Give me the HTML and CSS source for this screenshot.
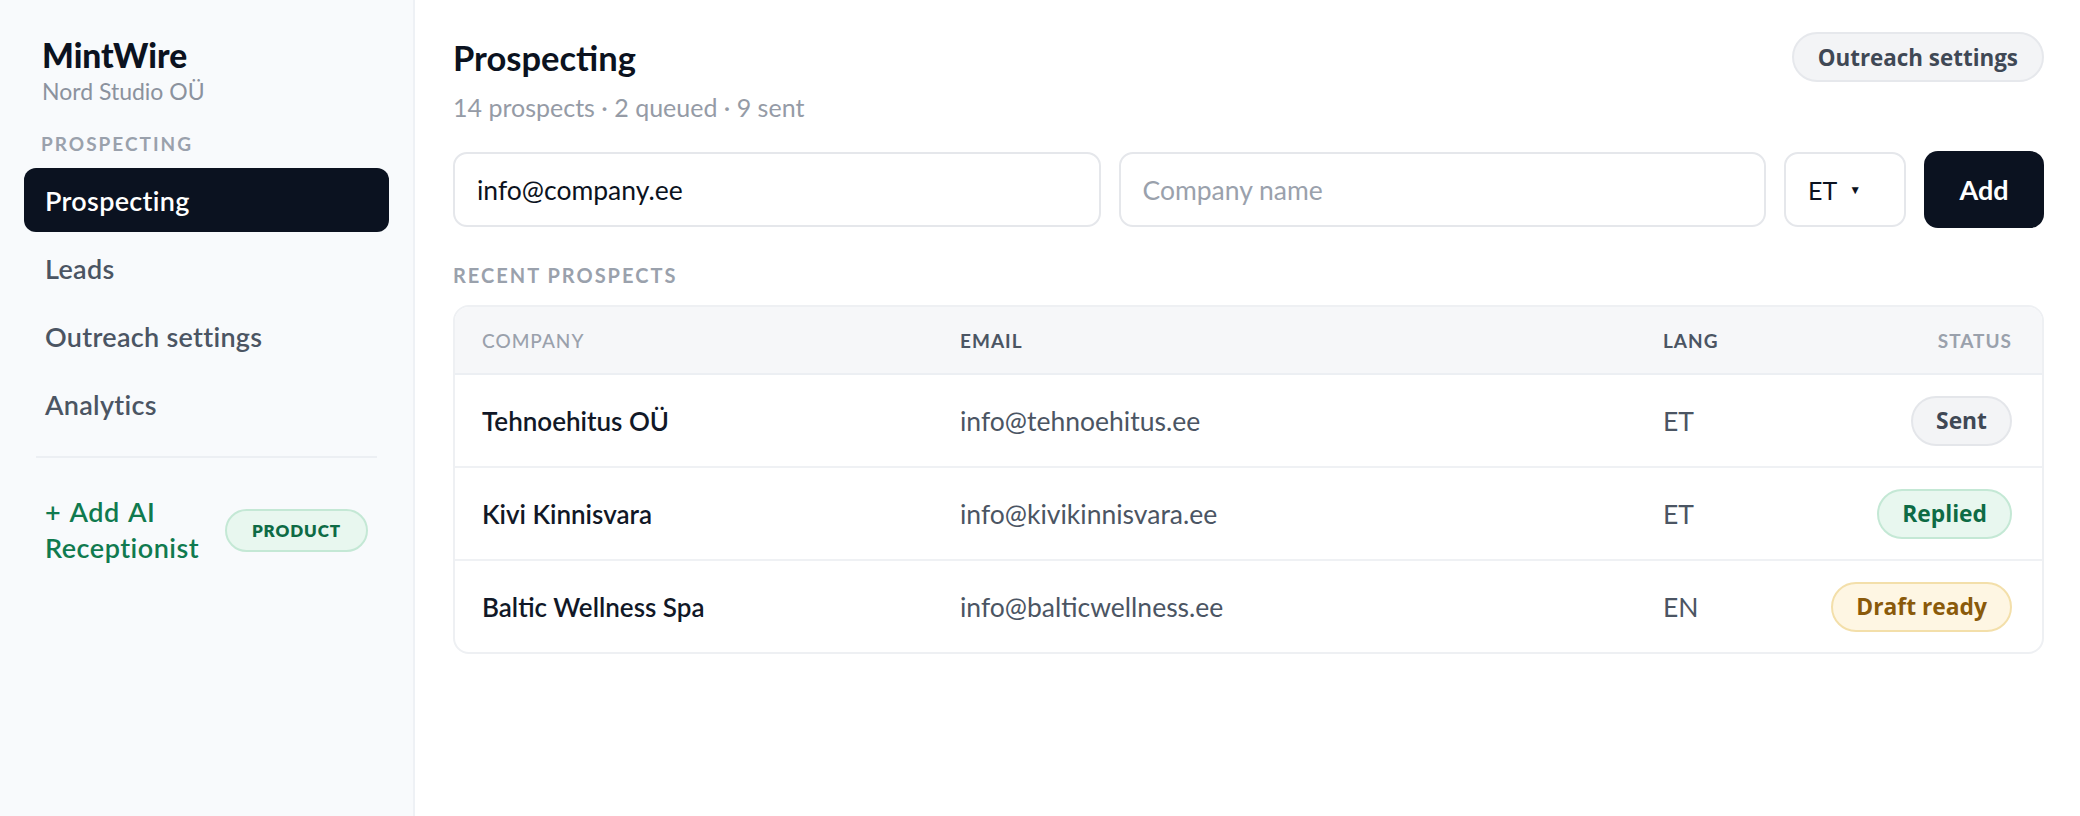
FILE: index.html
```html
<!DOCTYPE html>
<html lang="en">
<head>
    <meta charset="UTF-8">
    <meta name="viewport" content="width=device-width, initial-scale=1.0">
    <title>MintWire - Prospecting</title>
    <link rel="stylesheet" href="styles.css">
</head>
<body>
    <aside class="sidebar">
        <div class="brand">
            <div class="brand-name">MintWire</div>
            <div class="brand-org">Nord Studio OÜ</div>
        </div>

        <div class="nav-label">PROSPECTING</div>
        <nav class="nav">
            <a class="nav-item active" href="#">Prospecting</a>
            <a class="nav-item" href="#">Leads</a>
            <a class="nav-item" href="#">Outreach settings</a>
            <a class="nav-item" href="#">Analytics</a>
        </nav>

        <div class="divider"></div>

        <a class="promo" href="#">
            <span class="promo-text">+ Add AI Receptionist</span>
            <span class="tag">PRODUCT</span>
        </a>
    </aside>

    <main class="main">
        <header class="page-head">
            <div>
                <h1>Prospecting</h1>
                <p class="sub">14 prospects · 2 queued · 9 sent</p>
            </div>
            <button class="btn-ghost" type="button">Outreach settings</button>
        </header>

        <form class="add-row" id="addForm">
            <input class="field" type="email" value="info@company.ee">
            <input class="field" type="text" placeholder="Company name">
            <button class="lang-select" type="button">ET <span class="caret">▼</span></button>
            <button class="btn-add" type="submit">Add</button>
        </form>

        <div class="section-label">RECENT PROSPECTS</div>

        <div class="card">
            <div class="row head">
                <div class="col-muted">COMPANY</div>
                <div>EMAIL</div>
                <div>LANG</div>
                <div class="col-muted right">STATUS</div>
            </div>
            <div class="row">
                <div class="company">Tehnoehitus OÜ</div>
                <div class="email">info@tehnoehitus.ee</div>
                <div class="lang">ET</div>
                <div class="right"><span class="badge sent">Sent</span></div>
            </div>
            <div class="row">
                <div class="company">Kivi Kinnisvara</div>
                <div class="email">info@kivikinnisvara.ee</div>
                <div class="lang">ET</div>
                <div class="right"><span class="badge replied">Replied</span></div>
            </div>
            <div class="row">
                <div class="company">Baltic Wellness Spa</div>
                <div class="email">info@balticwellness.ee</div>
                <div class="lang">EN</div>
                <div class="right"><span class="badge draft">Draft ready</span></div>
            </div>
        </div>
    </main>
</body>
</html>
```

FILE: styles.css
```css
* {
    margin: 0;
    padding: 0;
    box-sizing: border-box;
}

body {
    display: flex;
    height: 100vh;
    font-family: Lato, "Open Sans", sans-serif;
    color: #0b1220;
    background: #fff;
}

a {
    text-decoration: none;
}

/* sidebar */

.sidebar {
    width: 415px;
    flex-shrink: 0;
    background-color: #f8fafc;
    border-right: 2px solid #eef1f5;
    padding: 36px 24px 0 24px;
}

.brand {
    padding: 0 18px;
}

.brand-name {
    font-size: 33.5px;
    line-height: 38px;
    font-weight: 900;
    color: #0b1220;
}

.brand-org {
    margin-top: 4px;
    font-size: 23px;
    line-height: 26px;
    color: #8b929e;
}

.nav-label {
    margin-top: 28px;
    padding: 0 17px;
    font-size: 19px;
    line-height: 24px;
    font-weight: 700;
    letter-spacing: 2px;
    color: #9aa1ac;
}

.nav {
    margin-top: 12px;
    display: flex;
    flex-direction: column;
    gap: 4px;
}

.nav-item {
    height: 64px;
    display: flex;
    align-items: center;
    padding: 0 21px;
    border-radius: 12px;
    font-size: 27px;
    font-weight: 600;
    letter-spacing: 0.3px;
    color: #4b5563;
}

.nav-item.active {
    background-color: #0b1220;
    color: #fff;
}

.divider {
    height: 2px;
    margin: 20px 12px 0;
    background-color: #eceff3;
}

.promo {
    margin-top: 20px;
    padding: 16px 21px;
    display: flex;
    align-items: center;
    gap: 16px;
}

.promo-text {
    flex: 1;
    font-size: 27px;
    line-height: 36px;
    font-weight: 600;
    letter-spacing: 0.5px;
    word-spacing: 2px;
    color: #107a4f;
}

.tag {
    height: 43px;
    padding: 0 25px;
    display: flex;
    align-items: center;
    border: 2px solid #c4e8d5;
    border-radius: 999px;
    background-color: #e8f7ef;
    color: #0e6b45;
    font-size: 17px;
    font-weight: 800;
    letter-spacing: 0.9px;
}

/* main */

.main {
    flex: 1;
    padding: 32px 36px 0 38px;
}

.page-head {
    display: flex;
    justify-content: space-between;
    align-items: flex-start;
}

h1 {
    margin-top: 6px;
    font-size: 34.5px;
    line-height: 40px;
    font-weight: 700;
    color: #0b1220;
}

.sub {
    margin-top: 13px;
    font-size: 25px;
    line-height: 32px;
    color: #959ba6;
}

.btn-ghost {
    height: 50px;
    padding: 0 24px;
    border: 2px solid #e6e8ec;
    border-radius: 999px;
    background-color: #f3f4f6;
    font-family: "Open Sans", sans-serif;
    font-size: 22.4px;
    font-weight: 700;
    color: #3f4855;
}

.add-row {
    margin-top: 29px;
    display: flex;
    gap: 18px;
}

.field {
    flex: 1;
    height: 75px;
    padding: 0 22px;
    border: 2px solid #e5e7eb;
    border-radius: 14px;
    font-family: inherit;
    font-size: 26.5px;
    color: #0b1220;
    outline: none;
}

.field::placeholder {
    color: #9aa1ac;
}

.lang-select {
    width: 122px;
    height: 75px;
    padding: 0 22px;
    display: flex;
    align-items: center;
    gap: 12px;
    border: 2px solid #e5e7eb;
    border-radius: 14px;
    background: #fff;
    font-family: inherit;
    font-size: 25px;
    color: #0b1220;
}

.caret {
    font-size: 12px;
}

.btn-add {
    width: 120px;
    height: 77px;
    margin-top: -1px;
    border: none;
    border-radius: 14px;
    background-color: #0b1220;
    color: #fff;
    font-family: inherit;
    font-size: 27px;
    font-weight: 700;
}

.section-label {
    margin-top: 35px;
    font-size: 20px;
    line-height: 24px;
    font-weight: 700;
    letter-spacing: 2px;
    color: #9aa1ac;
}

/* table */

.card {
    margin-top: 18px;
    border: 2px solid #eef0f3;
    border-radius: 16px;
    overflow: hidden;
}

.row {
    display: grid;
    grid-template-columns: 478px 703px 1fr auto;
    align-items: center;
    height: 93px;
    padding: 0 30px 0 27px;
    border-top: 2px solid #eff1f4;
}

.row.head {
    height: 66px;
    border-top: none;
    background-color: #f6f7f9;
    font-size: 19px;
    font-weight: 700;
    letter-spacing: 1px;
    color: #4b5563;
}

.row.head + .row {
    border-top: 2px solid #eceff3;
}

.col-muted {
    color: #9aa1ac;
}

.row.head .col-muted:first-child {
    font-weight: 500;
}

.right {
    justify-self: end;
}

.company {
    font-size: 26px;
    font-weight: 600;
    color: #111827;
}

.email,
.lang {
    font-size: 26.5px;
    color: #4b5563;
}

.badge {
    height: 50px;
    padding: 0 23px;
    display: inline-flex;
    align-items: center;
    border: 2px solid;
    border-radius: 999px;
    font-family: "Open Sans", sans-serif;
    font-size: 22.8px;
    font-weight: 700;
    white-space: nowrap;
}

.badge.sent {
    background-color: #f3f4f6;
    border-color: #e4e6ea;
    color: #3f4855;
}

.badge.replied {
    background-color: #e8f7ef;
    border-color: #c4e8d5;
    color: #0e6b45;
}

.badge.draft {
    background-color: #fef6e3;
    border-color: #f3dfaa;
    color: #8a5a0a;
}
```
